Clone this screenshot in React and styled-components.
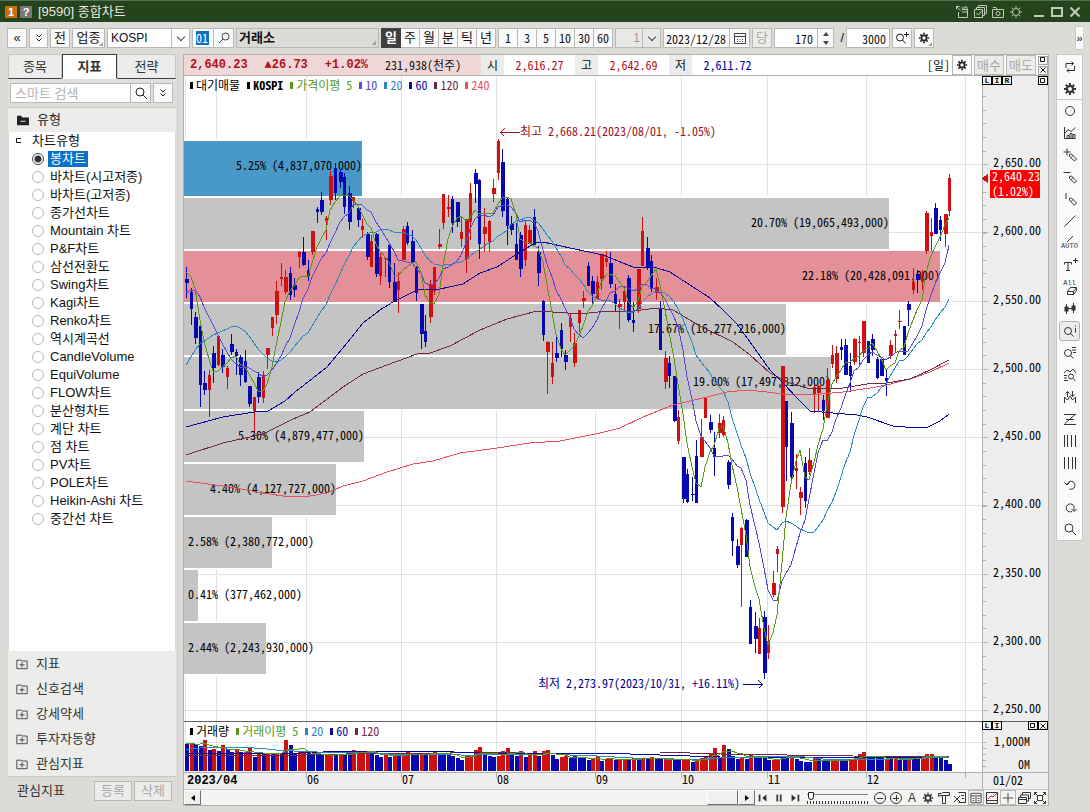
import React from "react";
import styled, { createGlobalStyle, css } from "styled-components";

const SANS = `"Liberation Sans", "Noto Sans CJK KR", sans-serif`;
const MONO = `"Noto Sans Mono CJK KR", "Liberation Mono", "Noto Sans CJK KR", monospace`;

const RED = "#d01010";
const BLUE = "#0808b0";

/* ---------- market data ---------- */

// [direction, high, body top, body bottom, low] on the vertical scale of the plot
const U = 1;
const D = 0;
const CANDLES = [
  [D,267,279,283,298],[D,288,292,309,325],[D,312,317,338,344],[D,326,326,385,407],[D,371,383,390,395],
  [U,370,375,390,417],[D,346,353,368,383],[U,336,336,365,366],[D,349,355,367,373],[U,366,368,377,389],
  [D,334,344,352,355],[D,349,352,356,375],[D,355,357,375,386],[D,350,361,382,383],[D,386,386,404,407],
  [U,397,397,411,432],[D,372,377,397,403],[U,371,375,398,403],[U,348,348,355,369],[U,317,317,328,336],
  [U,281,291,315,324],[U,263,277,279,286],[U,270,277,292,294],[D,267,273,295,300],[D,278,285,290,297],
  [U,251,252,257,268],[D,237,252,265,266],[D,260,270,276,281],[U,231,231,252,255],[D,207,209,212,223],
  [D,192,200,212,215],[U,216,218,221,240],[U,171,176,200,205],[D,163,168,193,200],[D,169,172,182,188],
  [D,173,177,207,214],[D,186,193,222,230],[U,197,197,201,208],[D,206,208,220,227],[U,219,226,230,238],
  [D,232,234,257,260],[U,235,241,267,267],[D,233,234,274,277],[U,253,257,276,285],[U,257,258,259,277],
  [D,245,245,282,288],[D,263,282,302,302],[U,272,281,290,313],[U,226,229,260,260],[D,222,226,243,245],
  [D,230,241,262,262],[D,266,267,293,301],[D,304,304,334,349],[D,315,331,342,347],[U,280,284,317,323],
  [U,267,267,291,295],[U,229,244,247,249],[U,194,194,223,229],[U,195,207,209,217],[D,196,199,223,233],
  [D,202,202,222,227],[U,217,232,239,247],[U,219,219,259,273],[U,183,193,222,240],[D,169,173,184,203],
  [D,179,180,244,259],[U,208,227,234,252],[U,220,221,242,252],[U,179,188,194,202],[U,139,141,173,180],
  [D,149,162,211,217],[D,198,199,226,245],[D,216,224,230,235],[D,223,244,260,260],[D,232,235,269,277],
  [U,220,225,260,266],[U,225,230,244,244],[D,209,217,245,245],[D,246,252,273,286],[D,300,301,335,341],
  [U,341,342,352,394],[U,342,363,377,384],[D,336,353,358,362],[D,323,330,349,357],[D,350,355,362,370],
  [U,313,318,327,342],[U,333,343,363,367],[U,310,310,323,332],[U,291,298,301,308],[D,262,266,286,286],
  [D,276,281,294,303],[U,276,282,299,299],[U,254,254,279,290],[U,251,258,262,267],[D,252,263,284,288],
  [D,284,294,304,311],[U,299,304,307,329],[U,287,291,302,310],[D,275,278,320,322],[D,302,320,323,332],
  [U,269,269,309,313],[U,217,231,266,266],[D,237,248,267,270],[D,255,261,289,292],[U,278,287,293,300],
  [D,301,308,350,350],[U,351,358,382,389],[D,356,363,376,388],[D,376,376,421,422],[U,410,417,441,444],
  [D,457,457,499,503],[D,469,474,502,503],[D,477,494,495,501],[D,440,456,503,503],[U,419,437,457,457],
  [U,397,397,418,418],[D,415,422,430,433],[D,432,448,457,476],[U,414,423,433,438],[U,416,420,435,437],
  [D,460,462,485,489],[D,513,517,541,556],[D,539,546,565,568],[U,527,528,545,607],[D,519,520,557,557],
  [D,600,607,644,644],[D,612,626,639,653],[U,618,628,654,654],[D,611,617,673,679],[U,625,642,653,659],
  [U,571,583,595,597],[U,546,549,554,572],[U,366,366,507,513],[D,401,401,447,481],[D,412,423,477,480],
  [U,454,468,471,489],[U,487,492,498,515],[D,457,463,501,508],[U,448,460,472,475],[U,385,387,394,413],
  [U,385,386,393,412],[D,395,400,411,420],[U,368,380,418,418],[U,345,355,364,368],[U,346,353,379,383],
  [D,339,347,350,360],[D,339,345,375,375],[D,353,366,376,392],[U,338,339,362,365],[U,336,342,343,366],
  [U,321,321,353,357],[D,341,341,363,363],[D,334,339,350,356],[D,357,359,378,379],[D,357,359,376,376],
  [D,369,378,381,396],[U,340,345,356,359],[U,330,334,336,353],[U,310,321,322,329],[D,326,326,355,355],
  [D,301,304,310,326],[U,268,282,290,294],[D,270,274,280,293],[U,270,275,282,290],[U,211,213,251,254],
  [U,218,232,236,251],[D,203,208,234,234],[D,216,220,230,241],[U,214,214,234,247],[U,174,178,211,216],
];

const VOLUMES = [
  27,28,27,25,31,21,22,20,26,22,19,21,19,19,23,14,19,17,18,17,18,17,31,26,18,20,20,18,16,16,16,17,17,16,17,17,16,21,
  20,20,19,18,16,14,17,14,17,15,16,20,17,16,18,16,18,20,18,17,16,15,13,11,15,16,21,24,16,15,14,15,20,23,16,15,20,14,
  16,20,15,20,21,16,12,14,15,13,16,13,13,11,13,15,10,12,13,11,11,11,12,13,12,13,13,14,13,12,13,12,12,11,12,12,9,11,
  13,15,17,23,14,26,22,15,12,13,12,16,14,13,13,11,11,12,15,14,16,12,10,9,9,13,12,11,10,11,11,12,12,11,12,17,19,14,
  14,13,13,12,13,12,11,11,15,13,13,14,17,17,14,14,11,7,
];
const VOLUME_SIDES =
  "BRBBRBRBRBBRBRRBRBRBRBRBBRRBBBBRRBRBBRRRRBBBRBRBRRBBRBRRBBBBBBRRRRBBBRRRBBRBRRBRRBBRRBBBBBRRBRRBRRBRBRBRBBRRBBRRBRRRRRBRBBBRBRBBBBRRBBRBBBBRBBBRRBBRRRRBBBBRBRBBRBBRRRBBBB";

const STEP = 4.515;
const barX = (i) => 186 + i * STEP;

// moving average over n values; `lead` holds the points before the first full window
const average = (values, n, lead) =>
  values.map((v, i) => {
    if (i < lead.length && i < n - 1) return lead[i];
    const part = values.slice(Math.max(0, i - n + 1), i + 1);
    return part.reduce((a, b) => a + b, 0) / part.length;
  });
const toPoints = (values) => values.map((v, i) => `${Math.round(barX(i))},${Math.round(v)}`).join(" ");

const CLOSES = CANDLES.map(([up, , top, bottom]) => (up ? top : bottom));
const MA5 = toPoints(average(CLOSES, 5, [272, 277, 288, 320]));
const MA10 = toPoints(average(CLOSES, 10, [293, 290, 290, 297, 307, 317, 325, 335, 343]));
const MA20 = toPoints(
  average(CLOSES, 20, [365, 357, 350, 344, 341, 338, 335, 333, 331, 329, 327, 326, 328, 331, 336, 343, 349, 354, 358])
);
const MA60 =
  "186,427 223,417 254,412 268,411 285,401 295,392 313,378 327,367 347,343 363,323 380,310 393,302 417,290 440,289 463,284 480,273 497,267 520,252 537,242 543,242 570,248 603,255 633,267 657,268 670,272 690,285 710,298 723,310 737,324 750,342 770,370 783,383 797,398 810,411 833,413 857,415 867,417 893,426 917,428 928,427 940,421 949,414";
const MA120 =
  "186,455 223,443 263,434 293,419 310,412 343,387 363,374 387,365 417,354 430,353 450,346 480,330 507,319 537,311 553,312 580,314 607,311 633,311 657,308 673,310 700,326 733,342 750,355 770,373 787,382 810,389 843,388 867,384 887,383 910,379 930,370 949,360";
const MA240 =
  "186,481 230,487 257,492 283,496 310,496 327,493 343,486 363,481 387,472 413,464 433,461 460,453 497,448 530,443 560,441 580,437 600,433 620,428 643,417 673,405 707,397 727,392 747,390 767,392 783,394 810,395 843,392 870,388 887,385 913,378 930,372 949,363";

const VOL_Y = VOLUMES.map((v) => 771 - v);
const VMA5 = toPoints(average(VOL_Y, 5, [744, 743, 744, 744]));
const VMA20 = toPoints(
  average(VOL_Y, 20, [749, 749, 748, 748, 747, 747, 747, 747, 747, 747, 747, 747, 747, 747, 747, 748, 748, 748, 749])
);

const PROFILE = [
  { y: 141, h: 55, right: 362, text: "5.25% (4,837,070,000)", fill: "#4898c8" },
  { y: 198, h: 51, right: 889, text: "20.70% (19,065,493,000)" },
  { y: 251, h: 51, right: 940, text: "22.18% (20,428,091,000)", fill: "#e49098" },
  { y: 304, h: 51, right: 786, text: "17.67% (16,277,216,000)" },
  { y: 357, h: 52, right: 831, text: "19.00% (17,497,812,000)" },
  { y: 411, h: 51, right: 364, text: "5.30% (4,879,477,000)" },
  { y: 464, h: 51, right: 336, text: "4.40% (4,127,727,000)" },
  { y: 517, h: 51, right: 272, text: "2.58% (2,380,772,000)" },
  { y: 570, h: 51, right: 198, text: "0.41% (377,462,000)" },
  { y: 623, h: 51, right: 266, text: "2.44% (2,243,930,000)" },
];

const MONTHS = [
  { x: 306, label: "06" },
  { x: 401, label: "07" },
  { x: 496, label: "08" },
  { x: 595, label: "09" },
  { x: 681, label: "10" },
  { x: 767, label: "11" },
  { x: 866, label: "12" },
];
const GRID_X = [185, 216, ...MONTHS.map((m) => m.x), 965];
const PRICES = [2650, 2600, 2550, 2500, 2450, 2400, 2350, 2300, 2250].map((p, i) => ({
  y: 164 + Math.round(i * 68.25),
  label: `2,${String(p).slice(1)}.00`,
}));
const MINOR_TICKS = Array.from({ length: 46 }, (_, i) => 96 + Math.round(i * 13.65));

const CHART_TYPES = [
  "봉차트", "바차트(시고저종)", "바차트(고저종)", "종가선차트", "Mountain 차트", "P&F차트", "삼선전환도",
  "Swing차트", "Kagi차트", "Renko차트", "역시계곡선", "CandleVolume", "EquiVolume", "FLOW차트", "분산형차트",
  "계단 차트", "점 차트", "PV차트", "POLE차트", "Heikin-Ashi 차트", "중간선 차트",
];
const GROUPS = ["지표", "신호검색", "강세약세", "투자자동향", "관심지표"];

/* ---------- icons ---------- */

const IconSvg = styled.svg`
  display: block;
  flex: none;
  fill: none;
  stroke: currentColor;
  stroke-width: 1;
`;
const Icon = ({ size = 14, children }) => (
  <IconSvg width={size} height={size} viewBox="0 0 14 14" aria-hidden="true">
    {children}
  </IconSvg>
);

const Gear = ({ size }) => (
  <Icon size={size}>
    <circle cx="7" cy="7" r="3" strokeWidth="2" />
    <path d="M7 1v2M7 11v2M1 7h2M11 7h2M2.8 2.8l1.4 1.4M9.8 9.8l1.4 1.4M2.8 11.2l1.4-1.4M9.8 4.2l1.4-1.4" strokeWidth="2" />
  </Icon>
);
const ThinGear = () => (
  <Icon>
    <circle cx="7" cy="7" r="3.5" />
    <path d="M7 1v2.500M7 10.500v2.500M1 7h2.500M10.500 7h2.500M2.800 2.800l1.700 1.700M9.500 9.500l1.700 1.700M2.800 11.200l1.700-1.700M9.500 4.500l1.700-1.700" />
  </Icon>
);
const Magnifier = ({ left }) => (
  <Icon>
    {left ? (
      <>
        <circle cx="8.500" cy="5.500" r="3.500" />
        <path d="M6 8l-4 4" />
      </>
    ) : (
      <>
        <circle cx="6" cy="6" r="4" />
        <path d="M9 9l4 4" />
      </>
    )}
  </Icon>
);
const MagnifierPlus = () => (
  <Icon>
    <circle cx="5" cy="6.500" r="3.500" />
    <path d="M7.500 9l3 3.500M11.500 1v5M9 3.500h5" />
  </Icon>
);
const Pencil = <path d="M6.500 6.500l2-0.500 5 5-2 2-5-4.500zM10 7.500l-2 2" />;

const TOOL_ICONS = [
  ["새로고침", <><path d="M3 8V3.500h7.500M8.500 1.500l2 2-2 2M11.500 6v4.500H4M6 8.500l-2 2 2 2" /></>],
  ["설정", null],
  ["원", <circle cx="7" cy="7" r="4.500" />],
  ["지표 차트", <><path d="M1.500 1v11.500H12.500M1.500 7.500L5 3.500l3 2 4.500-4M4 12V9.500h2V12M7 12V7.500h2V12M10 12V8.500h2V12" /></>],
  ["십자선 그리기", <><path d="M4 0.500v7M0.500 4h7" />{Pencil}</>],
  ["수평선 그리기", <><path d="M0.500 2.500h7" />{Pencil}</>],
  ["수직선 그리기", <><path d="M3 1v6" />{Pencil}</>],
  ["추세선", <path d="M1.500 12.500l11-11" />],
  ["자동 추세선", "AUTO"],
  ["텍스트 추가", "T"],
  ["모두 지우기", "All"],
  ["봉 표시", <><path d="M3.500 2v10M10.500 1v10" /><path d="M3.500 4.500v5M10.500 3.500v5" strokeWidth="4" /><path d="M5 6.500h4" /></>],
  ["정보 보기", <><circle cx="5" cy="7" r="3.500" /><path d="M7.500 9.500l3 3M12.500 4v4.500M12.500 1.500v1" /></>],
  ["목록 보기", <><circle cx="5" cy="7" r="3.500" /><path d="M7.500 9.500l3 3M9 1.500h4M9 4h4M10 6.500h3" /></>],
  ["패턴 찾기", <><circle cx="8" cy="8.500" r="2.500" /><path d="M10 10.500l2.500 2.500M1 5l3-3 3 2 3-3 3 4M1 7.500h3M1 10h3M1 12.500h4" /></>],
  ["신호", <><path d="M1.500 13V7l3 3 2.500-4 2.500 4 3-3v6M4.500 7V1.500M2.500 3.500l2-2 2 2M9.500 1v5.500M7.500 4.500l2 2 2-2" /></>],
  ["되돌림", <><path d="M1 2.500h12M1 12.500h12M3 7.500h8M1.500 12L12 2.500" /></>],
  ["시간대", <path d="M1.500 1v12M4.500 1v12M8.500 1v12M12.500 1v12" />],
  ["등분선", <path d="M1.500 1v12M5.500 1v12M9.500 1v12M12.500 1v12" />],
  ["실행 취소", <><path d="M4 6.500A4 4 0 1 1 6.500 11M1.500 4.500l2.500 2.500 2.500-2.500" /></>],
  ["다시 실행", <><path d="M9 11.500A4 4 0 1 1 11 6.500V11M8.500 9l2.500 2.500 2.500-2.500" /></>],
  ["확대", <><circle cx="6" cy="6" r="4" /><path d="M9 9l4 4" /></>],
];

/* ---------- shared parts ---------- */

const Global = createGlobalStyle`
  * { box-sizing: border-box; }
  body { margin: 0; background: #dcdbd7; }
  button, input, select { font: inherit; color: inherit; margin: 0; }
`;

const Window = styled.div`
  display: flex;
  flex-direction: column;
  min-height: 100vh;
  background: #dcdbd7;
  border-bottom: 1px solid #606060;
  font-family: ${SANS};
  font-size: 13px;
  line-height: 16px;
  color: #111;
`;

const TitleBar = styled.header`
  display: flex;
  align-items: center;
  gap: 3px;
  height: 22px;
  padding: 0 6px 0 5px;
  background: #24441c;
  border-top: 1px solid #587050;
  color: #e8e8e0;
`;
const Badge = styled.span`
  width: 12px;
  height: 12px;
  line-height: 12px;
  font-size: 11px;
  font-weight: 700;
  text-align: center;
  color: #fff;
  background: ${(p) => p.$color};
`;
const Title = styled.h1`
  margin: 0 auto 0 3px;
  font-size: 13px;
  font-weight: 400;
`;
const TitleTools = styled.div`
  display: flex;
  margin-right: ${(p) => (p.$apart ? 2 : 0)}px;
`;
const TitleButton = styled.button`
  display: grid;
  place-items: center;
  width: 18px;
  height: 20px;
  padding: 0;
  border: 0;
  background: none;
  color: #c0ccb8;
`;

const Toolbar = styled.div`
  display: flex;
  align-items: center;
  gap: 2px;
  height: 32px;
  padding: 0 7px;
`;
const controlBox = css`
  height: 20px;
  border: 1px solid #b8b8b4;
  background: #fafafa;
`;
const ToolButton = styled.button`
  ${controlBox}
  display: grid;
  place-items: center;
  flex: none;
  position: relative;
  width: ${(p) => p.$width || 20}px;
  padding: 0;
  font-size: 13px;
  line-height: 16px;
  color: ${(p) => (p.$muted ? "#a8a8a8" : "#222")};
  background: ${(p) => (p.$muted ? "#ececea" : "#fafafa")};
  ${(p) =>
    p.$corner &&
    css`
      &::after {
        content: "";
        position: absolute;
        right: 1px;
        bottom: 1px;
        border: 2px solid transparent;
        border-right-color: #a0a0a0;
        border-bottom-color: #a0a0a0;
      }
    `}
`;
const SelectWrap = styled.div`
  ${controlBox}
  display: flex;
  flex: none;
  position: relative;
  width: ${(p) => p.$width}px;
  background: ${(p) => (p.$muted ? "#e8e8e6" : "#fff")};
  &::after {
    content: "";
    position: absolute;
    right: 5px;
    top: 5px;
    width: 5px;
    height: 5px;
    border: solid #444;
    border-width: 0 1px 1px 0;
    transform: rotate(45deg);
  }
`;
const Select = styled.select`
  flex: 1;
  min-width: 0;
  appearance: none;
  border: 0;
  padding: 0 20px 0 3px;
  background: linear-gradient(#b8b8b4, #b8b8b4) right 17px top / 1px 100% no-repeat;
  font-size: 12px;
  text-align: ${(p) => (p.$muted ? "right" : "left")};
  color: ${(p) => (p.$muted ? "#989898" : "#111")};
`;
const FieldGroup = styled.div`
  ${controlBox}
  display: flex;
  flex: none;
  width: ${(p) => p.$width}px;
`;
const Field = styled.input`
  flex: 1;
  min-width: 0;
  height: 18px;
  padding: 0 ${(p) => p.$pad || 3}px;
  border: 0;
  background: #fff;
  font-family: ${MONO};
  font-size: 12px;
  text-align: ${(p) => p.$align || "left"};
`;
const CodeCell = styled.div`
  flex: 1;
  display: flex;
  padding: 2px 3px;
  background: #fff;
`;
const CodeInput = styled.input`
  width: 13px;
  height: 14px;
  padding: 0;
  border: 0;
  background: #1070c0;
  color: #fff;
  font-family: ${MONO};
  font-size: 12px;
`;
const InnerButton = styled.button`
  display: grid;
  place-items: center;
  width: 20px;
  height: 18px;
  padding: 0;
  border: 0;
  border-left: 1px solid #b8b8b4;
  background: #fafafa;
  color: #444;
`;
const MarketName = styled.output`
  ${controlBox}
  flex: none;
  width: 143px;
  padding: 0 2px;
  font-size: 13px;
  font-weight: 700;
  line-height: 17px;
  background: linear-gradient(135deg, transparent 50%, #a0a0a0 50%) right 2px bottom 2px / 4px 4px no-repeat #dcdbd7;
`;
const Segments = styled.div`
  display: flex;
  flex: none;
  width: 115px;
`;
const Segment = styled.button`
  ${controlBox}
  flex: 1;
  padding: 0;
  & + & {
    border-left: 0;
  }
  font-family: ${(p) => (p.$mono ? MONO : SANS)};
  font-size: ${(p) => (p.$mono ? 12 : 13)}px;
  line-height: 16px;
  ${(p) =>
    p.$on &&
    css`
      background: #404040;
      border-color: #404040;
      color: #fff;
      font-weight: 700;
    `}
`;
const Spinner = styled.div`
  display: grid;
  width: 16px;
  border-left: 1px solid #b8b8b4;
`;
const SpinButton = styled.button`
  display: grid;
  place-items: center;
  height: 9px;
  padding: 0;
  border: 0;
  background: #fafafa;
  &::before {
    content: "";
    border: 3px solid transparent;
    ${(p) => (p.$down ? "border-top: 4px solid #444; border-bottom: 0;" : "border-bottom: 4px solid #444; border-top: 0;")}
  }
`;
const Slash = styled.span`
  width: 8px;
  text-align: right;
`;
const Expand = styled.button`
  width: 8px;
  height: 24px;
  margin-left: auto;
  padding: 0;
  border: 1px solid #c8c8c4;
  border-width: 1px 0 1px 1px;
  background: #fafafa;
  font-size: 11px;
  line-height: 16px;
`;

const Main = styled.main`
  display: flex;
  flex: 1;
  align-items: flex-start;
  gap: 7px;
  padding: 0 7px 6px 8px;
`;

/* ---------- side panel ---------- */

const Side = styled.aside`
  display: flex;
  flex-direction: column;
  flex: none;
  align-self: stretch;
  width: 168px;
  margin-bottom: 2px;
  background: #ececea;
`;
const Tabs = styled.div`
  display: grid;
  grid-template-columns: 54px 55px 1fr;
  height: 25px;
`;
const Tab = styled.button`
  padding: 0;
  border: 1px solid #c8c8c4;
  border-bottom: 1px solid #404040;
  background: #ececea;
  font-size: 13px;
  line-height: 18px;
  color: #333;
  ${(p) =>
    p.$on &&
    css`
      background: #fff;
      border-color: #404040;
      border-bottom-color: #fff;
      font-weight: 700;
    `}
`;
const SearchRow = styled.form`
  display: flex;
  height: 28px;
  padding: 4px 3px 3px 2px;
  background: #e0dfdb;
`;
const SearchInput = styled.input`
  ${controlBox}
  flex: 1;
  min-width: 0;
  padding: 0 4px;
  background: #fff;
  font-size: 13px;
  &::placeholder {
    color: #b4b4b4;
  }
`;
const SearchButton = styled(ToolButton)`
  border-left-width: ${(p) => (p.$apart ? 1 : 0)}px;
  margin-left: ${(p) => (p.$apart ? 2 : 0)}px;
`;
const SideHeader = styled.h2`
  display: flex;
  align-items: center;
  gap: 8px;
  height: 25px;
  margin: 0;
  padding: 0 9px;
  border-top: 1px solid #c8c8c4;
  font-size: 13px;
  font-weight: 400;
  color: #222;
`;
const Tree = styled.div`
  flex: 1;
  border: 1px solid #dcdbd7;
  border-width: 0 1px;
  background: #fff;
`;
const TreeHead = styled.div`
  display: flex;
  align-items: center;
  gap: 10px;
  height: 18px;
  padding: 0 7px;
`;
const TreeRow = styled.label`
  display: flex;
  align-items: center;
  gap: 4px;
  height: 18px;
  padding-left: 23px;
`;
const Radio = styled.input`
  appearance: none;
  width: 12px;
  height: 12px;
  border: 1px solid #b8b8b8;
  border-radius: 50%;
  background: #fff;
  &:checked {
    border-color: #444;
    background: radial-gradient(#333 0 3px, #fff 4px);
  }
`;
const RadioText = styled.span`
  padding: 0 2px;
  ${(p) => p.$on && "background: #0a70c8; color: #fff;"}
`;
const GroupList = styled.div`
  display: grid;
  grid-auto-rows: 25px;
`;
const GroupButton = styled.button`
  display: flex;
  align-items: center;
  gap: 8px;
  padding: 0 8px;
  border: 0;
  background: none;
  color: #333;
  text-align: left;
`;
const SideFooter = styled.div`
  display: flex;
  align-items: center;
  gap: 2px;
  height: 28px;
  padding: 0 4px 0 9px;
  border-top: 1px solid #c8c8c4;
  background: #dcdbd7;
`;
const FooterLabel = styled.span`
  margin-right: auto;
  color: #333;
`;

/* ---------- chart panel ---------- */

const Panel = styled.section`
  flex: 1;
  min-width: 0;
  border: 1px solid #b0b0ac;
  background: #fff;
`;
const QuoteBar = styled.div`
  display: flex;
  height: 21px;
  border-bottom: 1px solid #b0b0ac;
  font-family: ${MONO};
  font-size: 12px;
  line-height: 20px;
`;
const QuoteLead = styled.div`
  display: flex;
  gap: 17px;
  width: 297px;
  padding-left: 6px;
  background: #f0d8d8;
`;
const Strong = styled.strong`
  font-family: "Liberation Mono", monospace;
  color: #b01018;
`;
const QuoteLabel = styled.span`
  width: 23px;
  background: #ececea;
  text-align: center;
`;
const QuoteValue = styled.span`
  width: 71px;
  text-align: center;
  color: ${(p) => p.$color};
`;
const QuoteTools = styled.div`
  display: flex;
  align-items: center;
  gap: 2px;
  margin-left: auto;
`;
const MiniStack = styled.div`
  display: grid;
  gap: 1px;
`;
const MiniButton = styled.button`
  display: grid;
  place-items: center;
  width: 10px;
  height: 9px;
  padding: 0;
  border: 1px solid ${(p) => (p.$dark ? "#000" : "#a0a0a0")};
  background: #f4f4f2;
  font-family: "Liberation Mono", monospace;
  font-size: 8px;
  font-weight: 700;
  line-height: 8px;
`;
const Pane = styled.div`
  position: relative;
`;
const Legend = styled.div`
  position: absolute;
  top: ${(p) => p.$top}px;
  left: 6px;
  display: flex;
  gap: 7px;
  font-family: ${MONO};
  font-size: 12px;
  line-height: 14px;
  white-space: pre;
`;
const LegendItem = styled.span`
  display: flex;
  align-items: center;
  gap: 3px;
  color: ${(p) => p.$color};
  font-weight: ${(p) => (p.$bold ? 700 : 400)};
  &::before {
    content: "";
    width: 3px;
    height: 7px;
    background: currentColor;
  }
`;
const CornerTools = styled.div`
  position: absolute;
  top: 0;
  right: 0;
  width: 66px;
  display: flex;
  & > :nth-last-child(${(p) => p.$end}) {
    margin-left: auto;
  }
`;
const Plot = styled.svg`
  display: block;
  width: 100%;
  height: auto;
  shape-rendering: crispEdges;
  font-family: ${MONO};
  font-size: 12px;
`;
const Line = styled.polyline`
  fill: none;
  stroke: ${(p) => p.$color};
  stroke-width: 1;
`;

const ScrollRow = styled.div`
  display: flex;
  align-items: center;
  height: 16px;
  border-top: 1px solid #c8c8c4;
  background: #f4f4f3;
`;
const raised = css`
  border: 1px solid;
  border-color: #fff #707070 #707070 #fff;
  background: #f0f0ee;
`;
const ArrowButton = styled.button`
  ${raised}
  display: grid;
  place-items: center;
  width: 17px;
  height: 15px;
  padding: 0;
  &::before {
    content: "";
    border: 3px solid transparent;
    ${(p) => (p.$right ? "border-left: 4px solid #000; border-right: 0;" : "border-right: 4px solid #000; border-left: 0;")}
  }
`;
const Track = styled.div`
  display: flex;
  justify-content: flex-end;
  flex: 1;
  height: 15px;
`;
const Thumb = styled.div`
  ${raised}
  width: 31px;
`;
const SmallTool = styled.button`
  display: grid;
  place-items: center;
  width: 16px;
  height: 15px;
  padding: 0;
  border: ${(p) => (p.$framed ? "1px solid #b8b8b4" : "0")};
  background: none;
  color: #333;
  font-size: 12px;
  line-height: 14px;
`;
const ZoomRange = styled.input`
  appearance: none;
  width: 61px;
  height: 12px;
  margin: 0 4px;
  background:
    linear-gradient(#808080, #808080) 0 2px / 100% 1px no-repeat,
    repeating-linear-gradient(90deg, #333 0 1px, transparent 1px 3px) 0 9px / 100% 3px no-repeat;
  &::-webkit-slider-thumb {
    appearance: none;
    width: 6px;
    height: 8px;
    margin-top: -3px;
    border: 1px solid #222;
    border-radius: 0 0 3px 3px;
    background: #fff;
  }
`;

const ToolStrip = styled.nav`
  display: grid;
  grid-auto-rows: 22px;
  flex: none;
  width: 27px;
  padding-top: 1px;
  border: 1px solid #c8c8c4;
  background: #fafafa;
`;
const StripButton = styled.button`
  display: grid;
  place-items: center;
  padding: 0;
  color: #333;
  border: ${(p) => (p.$on ? "1px solid #b0b0b0" : "0")};
  border-radius: ${(p) => (p.$on ? 3 : 0)}px;
  margin: ${(p) => (p.$on ? "1px 2px" : "0")};
  background: ${(p) => (p.$on ? "#ececec" : "none")};
  ${(p) => p.$rule && "border-bottom: 1px solid #c8c8c4;"}
`;
const Tiny = styled.span`
  display: grid;
  justify-items: center;
  font-family: "Liberation Mono", monospace;
  font-size: 7px;
  line-height: 8px;
`;

function StripGlyph({ glyph }) {
  if (glyph === null) return <Gear />;
  if (glyph === "AUTO")
    return (
      <Tiny>
        <IconSvg width="10" height="6" viewBox="0 0 10 6" aria-hidden="true"><path d="M2 6l6-6" /></IconSvg>
        AUTO
      </Tiny>
    );
  if (glyph === "T")
    return (
      <IconSvg width="16" height="14" viewBox="0 0 16 14" aria-hidden="true">
        <path d="M2.500 6.500V4.500h7v2M6 4.500v8M4 12.500h4M13.500 0v5M11 2.500h5" />
      </IconSvg>
    );
  if (glyph === "All")
    return (
      <Tiny>
        All
        <IconSvg width="14" height="8" viewBox="0 0 14 8" aria-hidden="true">
          <path d="M4.500 4.500h6v3h-6zM4.500 4.500l3-4h6l-3 4M13.500 0.500v3l-3 4" />
        </IconSvg>
      </Tiny>
    );
  return <Icon>{glyph}</Icon>;
}

function PriceChart() {
  return (
    <Plot viewBox="184 76 864 645" role="img" aria-label="KOSPI 일봉 차트">
      <rect x="982" y="76" width="66" height="645" fill="#eeeeee" />
      <g fill="#e2e2e2">
        {GRID_X.map((x) => (
          <rect key={x} x={x} y="76" width="1" height="645" />
        ))}
        {PRICES.map((p) => (
          <rect key={p.y} x="184" y={p.y} width="798" height="1" />
        ))}
      </g>
      <g fill="#b0b0b0">
        <rect x="982" y="76" width="1" height="645" />
        {MINOR_TICKS.map((y) => (
          <rect key={y} x="983" y={y} width="3" height="1" />
        ))}
        {PRICES.map((p) => (
          <rect key={p.y} x="983" y={p.y} width="5" height="1" />
        ))}
      </g>
      {PROFILE.map((b) => (
        <g key={b.y}>
          <rect x="184" y={b.y - 2} width={b.right - 184} height={b.h + 4} fill="#ffffff" />
          <rect x="184" y={b.y} width={b.right - 184} height={b.h} fill={b.fill || "#c4c4c4"} />
        </g>
      ))}
      <g fill="#000000">
        {PROFILE.map((b) => {
          const inside = b.right - 184 > b.text.length * 6;
          return (
            <text key={b.y} x={inside ? b.right : 188} y={b.y + 29} textAnchor={inside ? "end" : "start"}>
              {b.text}
            </text>
          );
        })}
        {PRICES.map((p) => (
          <text key={p.y} x="993" y={p.y + 3}>
            {p.label}
          </text>
        ))}
      </g>
      {CANDLES.map(([up, high, top, bottom, low], i) => {
        const x = Math.round(barX(i));
        return (
          <g key={i} fill={up ? RED : BLUE}>
            <rect x={x} y={high} width="1" height={low - high} />
            <rect x={x - 1} y={top} width={i % 2 ? 3 : 4} height={Math.max(1, bottom - top)} />
          </g>
        );
      })}
      <Line points={MA240} $color="#e85060" />
      <Line points={MA120} $color="#702848" />
      <Line points={MA60} $color="#0808a0" />
      <Line points={MA20} $color="#2888c0" />
      <Line points={MA10} $color="#5848d8" />
      <Line points={MA5} $color="#589818" />
      <text x="520" y="136" fill="#a01020">최고 2,668.21(2023/08/01, -1.05%)</text>
      <path d="M520 132.500H500.500M504.500 128.500l-4 4 4 4" fill="none" stroke="#a01020" />
      <text x="538" y="688" fill="#000090">최저 2,273.97(2023/10/31, +16.11%)</text>
      <path d="M743 684.500H762.500M758.500 680.500l4 4-4 4" fill="none" stroke="#000090" />
      <rect x="990" y="170" width="50" height="28" fill="#ff0000" />
      <path d="M982 178.500l6-5v10z" fill="#d01010" />
      <g fill="#ffffff">
        <text x="992" y="181">2,640.23</text>
        <text x="992" y="196">(1.02%)</text>
      </g>
    </Plot>
  );
}

function VolumeChart() {
  return (
    <Plot viewBox="184 721 864 68" role="img" aria-label="거래량 차트">
      <rect x="982" y="721" width="66" height="68" fill="#eeeeee" />
      <g fill="#e2e2e2">
        {GRID_X.map((x) => (
          <rect key={x} x={x} y="721" width="1" height="51" />
        ))}
        <rect x="184" y="742" width="798" height="1" />
      </g>
      <rect x="184" y="721" width="864" height="1" fill="#606060" />
      {VOLUMES.map((v, i) => (
        <rect
          key={i}
          x={Math.round(barX(i)) - 1}
          y={771 - v}
          width="4"
          height={v}
          fill={VOLUME_SIDES[i] === "R" ? RED : BLUE}
        />
      ))}
      <Line points="186,756 300,755 346,754 450,753 520,752 660,752 720,754 853,756 949,757" $color="#702848" />
      <Line points="186,753 300,753 346,751 427,751 480,753 630,754 720,757 949,757" $color="#0808a0" />
      <Line points={VMA20} $color="#2888c0" />
      <Line points={VMA5} $color="#589818" />
      <rect x="184" y="772" width="798" height="17" fill="#eeeeee" />
      <g fill="#b0b0b0">
        <rect x="184" y="772" width="864" height="1" />
        <rect x="982" y="722" width="1" height="67" />
        {[...MONTHS.map((m) => m.x), 965].map((x) => (
          <rect key={x} x={x} y="773" width="1" height="5" />
        ))}
        {[742, 748, 754, 760, 766].map((y) => (
          <rect key={y} x="983" y={y} width="3" height="1" />
        ))}
      </g>
      <text x="187" y="784" fontWeight="700" fontFamily="Liberation Mono, monospace">2023/04</text>
      {MONTHS.map((m) => (
        <text key={m.x} x={m.x + 1} y="784">
          {m.label}
        </text>
      ))}
      <text x="1030" y="746" textAnchor="end">1,000M</text>
      <text x="1030" y="769" textAnchor="end">0M</text>
      <text x="993" y="785">01/02</text>
    </Plot>
  );
}

const Square = () => (
  <IconSvg width="6" height="6" viewBox="0 0 6 6" aria-hidden="true"><path d="M0.500 0.500h4v4h-4z" /></IconSvg>
);
const Cross = () => (
  <IconSvg width="6" height="6" viewBox="0 0 6 6" aria-hidden="true"><path d="M0.500 0.500l5 5M5.500 0.500l-5 5" /></IconSvg>
);

export default function App() {
  const [type, setType] = React.useState(CHART_TYPES[0]);
  return (
    <Window>
      <Global />
      <TitleBar>
        <Badge $color="#c87010">1</Badge>
        <Badge $color="#787878">?</Badge>
        <Title>[9590] 종합차트</Title>
        <TitleTools $apart>
          <TitleButton aria-label="창 분리"><Icon><path d="M1.500 1.500l4 4M1.500 4.500v-3h3M7 4.500h5.500v8h-9V7M7 2v2M7 7h5M9 4V2h3v2" /></Icon></TitleButton>
          <TitleButton aria-label="화면 선택"><Icon><path d="M1.500 4.500h8v8h-8zM3.500 4V2.500h8v8H10M5.500 2V0.500h8v8H12M3.500 8l2 2 3-4" /></Icon></TitleButton>
          <TitleButton aria-label="화면 캡처"><Icon><path d="M1.500 4.500h11v8h-11zM2 2.500h3l1 2" /><circle cx="7" cy="8.500" r="2" /></Icon></TitleButton>
          <TitleButton aria-label="화면 설정"><ThinGear /></TitleButton>
        </TitleTools>
        <TitleTools>
          <TitleButton aria-label="최소화"><Icon><path d="M2 11h10" strokeWidth="2" /></Icon></TitleButton>
          <TitleButton aria-label="최대화"><Icon><path d="M2 3h10v8H2z" strokeWidth="2" /></Icon></TitleButton>
          <TitleButton aria-label="닫기"><Icon><path d="M2.500 2.500l9 9M11.500 2.500l-9 9" strokeWidth="2" /></Icon></TitleButton>
        </TitleTools>
      </TitleBar>

      <Toolbar>
        <ToolButton>«</ToolButton>
        <ToolButton $width={19} aria-label="펼치기"><Icon><path d="M4.500 3.500L7 6l2.500-2.500M4.500 7.500L7 10l2.500-2.500" /></Icon></ToolButton>
        <ToolButton>전</ToolButton>
        <ToolButton $width={33} $corner>업종</ToolButton>
        <SelectWrap $width={83}>
          <Select aria-label="종목 이름"><option>KOSPI</option></Select>
        </SelectWrap>
        <FieldGroup $width={42}>
          <CodeCell><CodeInput aria-label="종목 코드" defaultValue="01" /></CodeCell>
          <InnerButton aria-label="종목 찾기"><Magnifier left /></InnerButton>
        </FieldGroup>
        <MarketName>거래소</MarketName>
        <Segments>
          {["일", "주", "월", "분", "틱", "년"].map((t, i) => (
            <Segment key={t} $on={i === 0}>{t}</Segment>
          ))}
        </Segments>
        <Segments>
          {["1", "3", "5", "10", "30", "60"].map((t) => (
            <Segment key={t} $mono>{t}</Segment>
          ))}
        </Segments>
        <SelectWrap $width={46} $muted>
          <Select aria-label="간격" $muted><option>1</option></Select>
        </SelectWrap>
        <FieldGroup $width={87}>
          <Field aria-label="날짜" defaultValue="2023/12/28" $pad={2} />
          <InnerButton aria-label="달력"><Icon><path d="M1.500 2.500h11v10h-11zM1.500 5.500h11M4 8.500h1M6.500 8.500h1M9 8.500h1M4 10.500h1M6.500 10.500h1M9 10.500h1" /></Icon></InnerButton>
        </FieldGroup>
        <ToolButton $muted>당</ToolButton>
        <FieldGroup $width={60}>
          <Field aria-label="표시 봉 수" defaultValue="170" $align="right" $pad={4} />
          <Spinner>
            <SpinButton aria-label="늘리기" />
            <SpinButton aria-label="줄이기" $down />
          </Spinner>
        </FieldGroup>
        <Slash>/</Slash>
        <FieldGroup $width={44}>
          <Field aria-label="전체 봉 수" defaultValue="3000" $align="right" $pad={3} />
        </FieldGroup>
        <ToolButton aria-label="확대"><MagnifierPlus /></ToolButton>
        <ToolButton aria-label="차트 설정" $corner><Gear size={12} /></ToolButton>
        <Expand>»</Expand>
      </Toolbar>

      <Main>
        <Side>
          <Tabs>
            <Tab>종목</Tab>
            <Tab $on>지표</Tab>
            <Tab>전략</Tab>
          </Tabs>
          <SearchRow onSubmit={(e) => e.preventDefault()}>
            <SearchInput aria-label="스마트 검색" placeholder="스마트 검색" />
            <SearchButton aria-label="검색"><Magnifier /></SearchButton>
            <SearchButton type="button" $apart aria-label="더 보기"><Icon><path d="M4.500 3.500L7 6l2.500-2.500M4.500 7.500L7 10l2.500-2.500" /></Icon></SearchButton>
          </SearchRow>
          <SideHeader>
            <Icon size={12}><path d="M0 2h5l1 2h8v9H0z" fill="currentColor" stroke="none" /><path d="M4 8.500h6" stroke="#fff" /></Icon>
            유형
          </SideHeader>
          <Tree role="radiogroup" aria-label="차트유형">
            <TreeHead>
              <IconSvg width="6" height="8" viewBox="0 0 6 8" aria-hidden="true"><path d="M5 1.500H0.500v4H5" /></IconSvg>
              차트유형
            </TreeHead>
            {CHART_TYPES.map((t) => (
              <TreeRow key={t}>
                <Radio type="radio" name="chart-type" checked={t === type} onChange={() => setType(t)} />
                <RadioText $on={t === type}>{t}</RadioText>
              </TreeRow>
            ))}
          </Tree>
          <GroupList>
            {GROUPS.map((g) => (
              <GroupButton key={g}>
                <Icon size={12}><path d="M1 2.500h5l1 1h6v9H1zM7 5v6M4 8h6" /></Icon>
                {g}
              </GroupButton>
            ))}
          </GroupList>
          <SideFooter>
            <FooterLabel>관심지표</FooterLabel>
            <ToolButton $width={38} $muted>등록</ToolButton>
            <ToolButton $width={38} $muted>삭제</ToolButton>
          </SideFooter>
        </Side>

        <Panel>
          <QuoteBar>
            <QuoteLead>
              <Strong>2,640.23</Strong>
              <Strong>▲26.73</Strong>
              <Strong>+1.02%</Strong>
              <span>231,938(천주)</span>
            </QuoteLead>
            <QuoteLabel>시</QuoteLabel>
            <QuoteValue $color="#b01018">2,616.27</QuoteValue>
            <QuoteLabel>고</QuoteLabel>
            <QuoteValue $color="#b01018">2,642.69</QuoteValue>
            <QuoteLabel>저</QuoteLabel>
            <QuoteValue $color="#000090">2,611.72</QuoteValue>
            <QuoteTools>
              <span>[일]</span>
              <ToolButton aria-label="차트 설정"><Gear size={12} /></ToolButton>
              <ToolButton $width={30} $muted>매수</ToolButton>
              <ToolButton $width={30} $muted>매도</ToolButton>
              <MiniStack>
                <MiniButton aria-label="최대화"><Square /></MiniButton>
                <MiniButton aria-label="닫기"><Cross /></MiniButton>
              </MiniStack>
            </QuoteTools>
          </QuoteBar>
          <Pane>
            <PriceChart />
            <Legend $top={2}>
              <LegendItem $color="#000">대기매물</LegendItem>
              <LegendItem $color="#000" $bold>KOSPI</LegendItem>
              <LegendItem $color="#589818">가격이평 5</LegendItem>
              <LegendItem $color="#5848d8">10</LegendItem>
              <LegendItem $color="#2888c0">20</LegendItem>
              <LegendItem $color="#0808a0">60</LegendItem>
              <LegendItem $color="#702848">120</LegendItem>
              <LegendItem $color="#e85060">240</LegendItem>
            </Legend>
            <CornerTools $end={1}>
              <MiniButton $dark>L</MiniButton>
              <MiniButton $dark>I</MiniButton>
              <MiniButton $dark>R</MiniButton>
              <MiniButton $dark aria-label="최대화"><Square /></MiniButton>
            </CornerTools>
          </Pane>
          <Pane>
            <VolumeChart />
            <Legend $top={3}>
              <LegendItem $color="#000">거래량</LegendItem>
              <LegendItem $color="#589818">거래이평 5</LegendItem>
              <LegendItem $color="#2888c0">20</LegendItem>
              <LegendItem $color="#0808a0">60</LegendItem>
              <LegendItem $color="#702848">120</LegendItem>
            </Legend>
            <CornerTools $end={2}>
              <MiniButton $dark>L</MiniButton>
              <MiniButton $dark>I</MiniButton>
              <MiniButton $dark aria-label="최대화"><Square /></MiniButton>
              <MiniButton $dark aria-label="닫기"><Cross /></MiniButton>
            </CornerTools>
          </Pane>
          <ScrollRow>
            <ArrowButton aria-label="왼쪽으로" />
            <Track><Thumb /></Track>
            <ArrowButton $right aria-label="오른쪽으로" />
            <SmallTool aria-label="처음"><Icon size={12}><path d="M3 3v8" strokeWidth="2" /><path d="M11 3v8L6 7z" fill="currentColor" stroke="none" /></Icon></SmallTool>
            <SmallTool aria-label="멈춤"><Icon size={12}><path d="M5 3v8M9 3v8" strokeWidth="2" /></Icon></SmallTool>
            <SmallTool aria-label="마지막"><Icon size={12}><path d="M11 3v8" strokeWidth="2" /><path d="M3 3v8l5-4z" fill="currentColor" stroke="none" /></Icon></SmallTool>
            <ZoomRange type="range" min="0" max="100" defaultValue="2" aria-label="확대 비율" />
            <SmallTool aria-label="축소"><Icon><circle cx="7" cy="7" r="5.500" /><path d="M4 7.500h6" /></Icon></SmallTool>
            <SmallTool aria-label="확대"><Icon><circle cx="7" cy="7" r="5.500" /><path d="M4 7.500h6M7.500 4v6" /></Icon></SmallTool>
            <SmallTool>A</SmallTool>
            <SmallTool aria-label="설정"><Gear size={12} /></SmallTool>
            <SmallTool aria-label="도구"><Icon><path d="M1.500 5.500v-3h3l1-1h7v3h-4v8h-3v-8h-3v1M5 4.500h4" /></Icon></SmallTool>
            <SmallTool aria-label="엑셀"><Icon><path d="M5.500 1.500h7v10h-7M1 5l6 6M7 5l-6 6M8 4.500h3M9 7.500h2" /></Icon></SmallTool>
            <SmallTool $framed aria-label="표"><Icon size={12}><path d="M1 1.500h12v11H1zM1 4.500h12M7 5v7M3 7.500h2M3 10h2M9 7.500h2M9 10h2" /></Icon></SmallTool>
            <SmallTool aria-label="차트"><Icon><path d="M1.500 1.500h11v11h-11zM1.500 9.500h11" /><path d="M3 8l3-3 2 1 4-4" stroke="#c02040" /></Icon></SmallTool>
            <SmallTool $framed aria-label="십자선"><Icon size={12}><path d="M7 1v12M1 7h12" /></Icon></SmallTool>
            <SmallTool aria-label="창 배열"><Icon><path d="M1.500 6.500h8v6h-8zM1.500 8.500h8M3.500 6V4h8v6H10M5.500 4V1.500h8v6H12" /></Icon></SmallTool>
            <SmallTool aria-label="전체 화면"><Icon><path d="M1.500 4V1.500H4M10 1.500h2.500V4M12.500 10v2.500H10M4 12.500H1.500V10M4.500 4.500h5v5h-5zM2 2l2 2M12 2l-2 2M2 12l2-2M12 12l-2-2" /></Icon></SmallTool>
          </ScrollRow>
        </Panel>

        <ToolStrip aria-label="그리기 도구">
          {TOOL_ICONS.map(([label, glyph], i) => (
            <StripButton key={label} aria-label={label} $rule={i === 1} $on={i === 12}>
              <StripGlyph glyph={glyph} />
            </StripButton>
          ))}
        </ToolStrip>
      </Main>
    </Window>
  );
}
